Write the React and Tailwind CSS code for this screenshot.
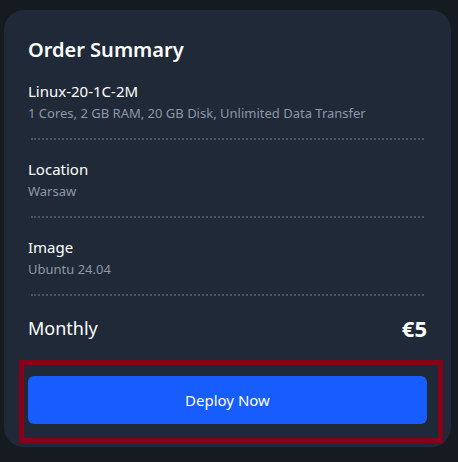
const ITEMS = [
  { label: 'Linux-20-1C-2M', value: '1 Cores, 2 GB RAM, 20 GB Disk, Unlimited Data Transfer' },
  { label: 'Location', value: 'Warsaw' },
  { label: 'Image', value: 'Ubuntu 24.04' },
]

export default function App() {
  return (
    <div
      className="min-h-screen bg-[#161b22] pt-[10px] pl-[4px] pr-[7px] pb-[15px]"
      style={{ fontFamily: '"Noto Sans", "Open Sans", sans-serif' }}
    >
      <div className="bg-[#1f2937] rounded-[20px] px-6 pt-[26px] pb-[4px]">
        <h2 className="text-white font-semibold text-[20px] leading-[28px]">Order Summary</h2>

        <div className="mt-4">
          {ITEMS.map((item, i) => (
            <div key={item.label} className={i > 0 ? 'pt-[18px]' : ''}>
              <p className="text-white text-[15px] leading-[22px]">{item.label}</p>
              <p className="text-[#8d97a7] text-[13px] leading-[20px] mt-px">{item.value}</p>
              <div className="mt-[15px] mx-[3px] border-t-2 border-dotted border-[#4b5563]" />
            </div>
          ))}
        </div>

        {/* Total */}
        <div className="flex items-center justify-between mt-[19px]">
          <span className="text-white text-[18px] leading-[26px]">Monthly</span>
          <span className="text-white font-bold text-[22px] leading-[26px]">€5</span>
        </div>

        {/* Highlighted action */}
        <div className="mt-[19px] ml-[-9px] mr-[-16px] border-[5px] border-[#86001a] pl-[4px] pr-[11px] pt-[11px] pb-[14px]">
          <button className="w-full h-[48px] rounded-[6px] bg-[#175dfd] text-white text-[15px]">
            Deploy Now
          </button>
        </div>
      </div>
    </div>
  )
}
